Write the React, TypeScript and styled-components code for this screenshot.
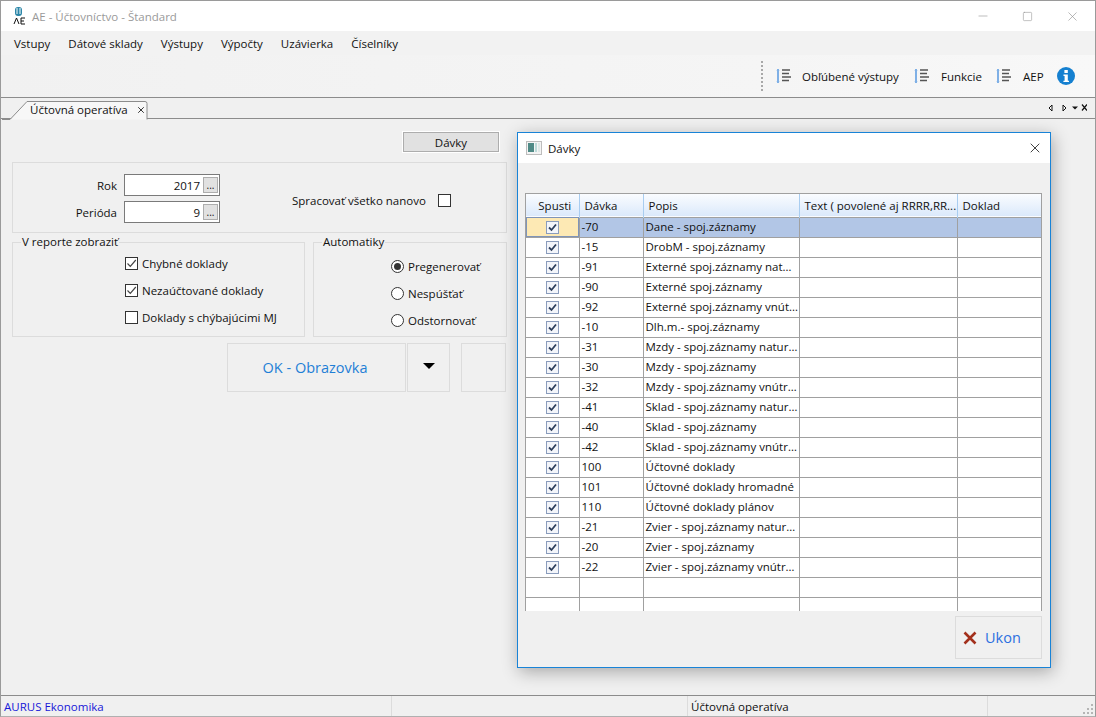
import React from "react";
import styled, { createGlobalStyle } from "styled-components";
import { Minus, Square, X } from "lucide-react";

const GlobalStyle = createGlobalStyle`
  html, body {
    margin: 0;
    padding: 0;
    background: #f0f0f0;
  }
  * {
    box-sizing: border-box;
  }
`;

const Window = styled.div`
  position: relative;
  width: 1096px;
  height: 717px;
  display: flex;
  flex-direction: column;
  overflow: hidden;
  background: #f0f0f0;
  border: 1px solid #9a9a9a;
  border-bottom-color: #b0b0b0;
  font-family: "Open Sans", "Noto Sans", sans-serif;
  font-size: 11.5px;
  color: #111;
`;

const TitleBar = styled.div`
  height: 30px;
  flex: none;
  background: #fff;
  display: flex;
  align-items: center;
  padding-left: 12px;
`;

const TitleText = styled.span`
  margin-left: 5px;
  font-size: 11.5px;
  color: #9a9a9a;
`;

const WindowButtons = styled.div`
  margin-left: auto;
  display: flex;
  align-items: center;
  color: #8f8f8f;
`;

const WindowButton = styled.div`
  width: 45px;
  height: 30px;
  display: flex;
  align-items: center;
  justify-content: center;
`;

const MenuBar = styled.div`
  height: 24px;
  flex: none;
  display: flex;
  align-items: center;
  gap: 18px;
  padding: 0 0 0 13px;
  background: #f2f2f2;
`;

const ToolBar = styled.div`
  height: 43px;
  flex: none;
  display: flex;
  align-items: center;
  justify-content: flex-end;
  padding: 0 20px 0 0;
  background: linear-gradient(90deg, #f1f1f1 0%, #f5f5f5 70%, #f8f8f8 100%);
  border-bottom: 1px solid #8c8c8c;
`;

const Grip = styled.div`
  width: 2px;
  height: 31px;
  margin-right: 13px;
  background: repeating-linear-gradient(#a8a8a8 0 2px, transparent 2px 4px);
`;

const ToolItem = styled.div<{ $gap: number; $width: number }>`
  width: ${(p) => p.$width}px;
  display: flex;
  align-items: center;
  gap: ${(p) => p.$gap}px;
`;

const TabStrip = styled.div`
  height: 21px;
  flex: none;
  position: relative;
  display: flex;
  align-items: flex-end;
  background: #f0f0f0;
  border-bottom: 1px solid #8c8c8c;
  padding-left: 1px;
`;

const Tab = styled.div`
  position: relative;
  height: 19px;
  margin-bottom: -1px;
  width: 146px;
  display: flex;
  align-items: center;
  padding-left: 28px;
  gap: 8px;
  font-size: 11.5px;
`;

const TabShape = styled.svg`
  position: absolute;
  left: 0;
  top: 0;
`;

const TabLabel = styled.span`
  position: relative;
`;

const TabClose = styled(X)`
  position: relative;
`;

const TabTools = styled.div`
  margin-left: auto;
  margin-right: 8px;
  align-self: center;
  display: flex;
  gap: 3px;
`;

const Content = styled.div`
  flex: 1;
  padding: 13px 0 0 11px;
  min-height: 0;
`;

const Form = styled.div`
  width: 495px;
  display: flex;
  flex-direction: column;
`;

const BatchButton = styled.div`
  align-self: flex-end;
  margin-right: 8px;
  width: 96px;
  height: 20px;
  background: #e1e1e1;
  border: 1px solid #adadad;
  outline: 1px solid #fff;
  display: flex;
  align-items: center;
  justify-content: center;
`;

const TopPanel = styled.div`
  margin-top: 10px;
  height: 71px;
  border: 1px solid #dcdcdc;
  display: flex;
  padding: 11px 0 0 0;
`;

const FieldGrid = styled.div`
  display: grid;
  grid-template-columns: 104px 96px;
  grid-auto-rows: 22px;
  row-gap: 5px;
  column-gap: 7px;
  align-items: center;
`;

const FieldLabel = styled.label`
  text-align: right;
`;

const FieldBox = styled.div`
  height: 22px;
  background: #fff;
  border: 1px solid #7a7a7a;
  display: flex;
  align-items: center;
  justify-content: flex-end;
  padding-right: 1px;
  gap: 3px;
`;

const DotsButton = styled.span`
  width: 15px;
  height: 16px;
  background: #e1e1e1;
  border: 1px solid #adadad;
  font-size: 10px;
  line-height: 15px;
  text-align: center;
`;

const RebuildRow = styled.div`
  margin: 16px 0 0 72px;
  height: 20px;
  display: flex;
  align-items: center;
  gap: 12px;
`;

const GroupRow = styled.div`
  margin-top: 9px;
  display: flex;
  gap: 8px;
`;

const Group = styled.fieldset<{ $width: number }>`
  width: ${(p) => p.$width}px;
  height: 95px;
  margin: 0;
  padding: 0;
  border: 1px solid #dcdcdc;
  position: relative;
`;

const GroupTitle = styled.span`
  position: absolute;
  left: 8px;
  top: -8px;
  padding: 0 1px;
  line-height: 14px;
  background: #f0f0f0;
`;

const OptionList = styled.div<{ $left: number; $top: number; $gap: number }>`
  padding: ${(p) => p.$top}px 0 0 ${(p) => p.$left}px;
  display: flex;
  flex-direction: column;
  gap: ${(p) => p.$gap}px;
`;

const Option = styled.div`
  height: 14px;
  display: flex;
  align-items: center;
  gap: 4px;
  white-space: nowrap;
`;

const CheckBox = styled.span<{ $on?: boolean }>`
  width: 13px;
  height: 13px;
  flex: none;
  background: #fff;
  border: 1px solid #333;
  display: block;
  position: relative;
`;

const CheckMark = styled.svg`
  position: absolute;
  left: 0;
  top: 0;
`;

const Radio = styled.span<{ $on?: boolean }>`
  width: 13px;
  height: 13px;
  flex: none;
  border-radius: 50%;
  background: #fff;
  border: 1px solid #333;
  display: flex;
  align-items: center;
  justify-content: center;
  &::after {
    content: "";
    width: 7px;
    height: 7px;
    border-radius: 50%;
    background: ${(p) => (p.$on ? "#333" : "transparent")};
  }
`;

const ActionRow = styled.div`
  margin-top: 6px;
  padding-left: 215px;
  display: flex;
`;

const ActionButton = styled.div<{ $width: number; $gapRight?: number }>`
  width: ${(p) => p.$width}px;
  height: 49px;
  margin-right: ${(p) => p.$gapRight ?? 0}px;
  border: 1px solid #dcdcdc;
  display: flex;
  align-items: center;
  justify-content: center;
`;

const OkLabel = styled.span`
  font-size: 14.5px;
  color: #1f7fd6;
  margin-right: 3px;
`;

const ArrowDown = styled.span`
  width: 0;
  height: 0;
  border-left: 6px solid transparent;
  border-right: 6px solid transparent;
  border-top: 6px solid #000;
  margin-bottom: 3px;
`;

const StatusBar = styled.div`
  height: 21px;
  flex: none;
  display: flex;
  align-items: center;
  border-top: 1px solid #8c8c8c;
  background: #f0f0f0;
  position: relative;
`;

const StatusCell = styled.div<{ $width: number; $blue?: boolean }>`
  width: ${(p) => p.$width}px;
  height: 100%;
  padding-left: 3px;
  display: flex;
  align-items: center;
  border-right: 1px solid #dcdcdc;
  color: ${(p) => (p.$blue ? "#1717d8" : "#111")};
`;

const ResizeGrip = styled.svg`
  position: absolute;
  right: 1px;
  bottom: 1px;
`;

const Dialog = styled.div`
  position: absolute;
  left: 516px;
  top: 131px;
  width: 534px;
  height: 536px;
  display: flex;
  flex-direction: column;
  background: #f0f0f0;
  border: 1px solid #1883d7;
  box-shadow: 2px 4px 16px rgba(0, 0, 0, 0.3);
`;

const DialogTitle = styled.div`
  height: 30px;
  flex: none;
  background: #fff;
  display: flex;
  align-items: center;
  padding-left: 8px;
  gap: 6px;
`;

const DialogClose = styled(X)`
  margin-left: auto;
  margin-right: 7px;
  color: #111;
`;

const TableWrap = styled.div`
  margin: 30px 0 0 7px;
  width: 517px;
  height: 418px;
  flex: none;
  overflow: hidden;
  background: #fff;
  border-top: 1px solid #a0a0a0;
  border-left: 1px solid #a0a0a0;
  border-right: 1px solid #a0a0a0;
`;

const Grid = styled.table`
  width: 515px;
  table-layout: fixed;
  border-collapse: collapse;
`;

const HeadRow = styled.tr`
  height: 23px;
  background: linear-gradient(#fafcff 0%, #dbe9fb 100%);
  border-bottom: 1px solid #a0a0a0;
`;

const HeadCell = styled.th<{ $center?: boolean }>`
  padding: 0 0 0 5px;
  font-weight: 400;
  text-align: ${(p) => (p.$center ? "center" : "left")};
  border-right: 1px solid #a9cdf0;
  white-space: nowrap;
  overflow: hidden;
  &:last-child {
    border-right: 0;
  }
`;

const BodyRow = styled.tr<{ $selected?: boolean }>`
  height: 20px;
  background: ${(p) => (p.$selected ? "#b2c6e6" : "#fff")};
`;

const Cell = styled.td`
  padding: 0 0 0 2px;
  border-right: 1px solid #a0a0a0;
  border-bottom: 1px solid #a0a0a0;
  white-space: nowrap;
  overflow: hidden;
  text-overflow: ellipsis;
  line-height: 14px;
  &:last-child {
    border-right: 0;
  }
`;

const CheckCell = styled.td<{ $focus?: boolean }>`
  padding: 0;
  text-align: center;
  border-right: 1px solid #a0a0a0;
  border-bottom: 1px solid #a0a0a0;
  background: ${(p) => (p.$focus ? "#fde9b4" : "transparent")};
  outline: ${(p) => (p.$focus ? "1px solid #7f94b8" : "none")};
  outline-offset: -1px;
`;

const GridCheck = styled.svg`
  display: block;
  margin: 0 auto;
`;

const DialogFooter = styled.div`
  flex: 1;
  display: flex;
  justify-content: flex-end;
  padding: 5px 8px 0 0;
`;

const CancelButton = styled.div`
  width: 87px;
  height: 43px;
  border: 1px solid #dcdcdc;
  display: flex;
  align-items: center;
  padding-left: 7px;
  gap: 8px;
  font-size: 14.5px;
  color: #2b6fe0;
`;

const columns = [53, 64, 156, 158, 84];

const rows: [string, string][] = [
  ["-70", "Dane  - spoj.záznamy"],
  ["-15", "DrobM - spoj.záznamy"],
  ["-91", "Externé spoj.záznamy naturálne"],
  ["-90", "Externé spoj.záznamy"],
  ["-92", "Externé spoj.záznamy vnútropodnikové"],
  ["-10", "Dlh.m.- spoj.záznamy"],
  ["-31", "Mzdy  - spoj.záznamy naturálne"],
  ["-30", "Mzdy  - spoj.záznamy"],
  ["-32", "Mzdy  - spoj.záznamy vnútropodnikové"],
  ["-41", "Sklad - spoj.záznamy naturálne"],
  ["-40", "Sklad - spoj.záznamy"],
  ["-42", "Sklad - spoj.záznamy vnútropodnikové"],
  ["100", "Účtovné doklady"],
  ["101", "Účtovné doklady hromadné"],
  ["110", "Účtovné doklady plánov"],
  ["-21", "Zvier - spoj.záznamy naturálne"],
  ["-20", "Zvier - spoj.záznamy"],
  ["-22", "Zvier - spoj.záznamy vnútropodnikové"],
];

const ListIcon = () => (
  <svg width="16" height="16" viewBox="0 0 16 16">
    <path d="M2 1v14" stroke="#7fb0e6" strokeWidth="2" />
    <path d="M1 3l1-2 1 2M1 13l1 2 1-2" stroke="#7fb0e6" strokeWidth="1" fill="none" />
    <path d="M6 2h8M6 5.5h7M6 9h9M6 12.5h7" stroke="#555" strokeWidth="1.4" />
  </svg>
);

const AppLogo = () => (
  <svg width="14" height="20" viewBox="0 0 14 20">
    <rect x="2" y="1" width="7" height="9" rx="3" fill="#2b86a8" />
    <path d="M4 2v6M7 2v6" stroke="#fff" strokeWidth="1" />
    <path d="M1 18l2.5-6 2.5 6M8 12v6h4M8 15h3M8 12h4" stroke="#111" strokeWidth="1" fill="none" />
  </svg>
);

const InfoIcon = () => (
  <svg width="18" height="18" viewBox="0 0 18 18">
    <circle cx="9" cy="9" r="9" fill="#1580d0" />
    <rect x="7.4" y="3" width="3.4" height="3" fill="#fff" />
    <path d="M6.5 7.5h4.3v6.2h1.2v1.4H6.4v-1.4h1.2V9H6.5z" fill="#fff" />
  </svg>
);

const GridCheckIcon = () => (
  <GridCheck width="13" height="13" viewBox="0 0 13 13">
    <rect x="0.5" y="0.5" width="12" height="12" fill="#f3f5fa" stroke="#8a9cbc" />
    <path d="M3 6.5l2.5 2.5L10 3.5" stroke="#2c3e5c" strokeWidth="1.8" fill="none" />
  </GridCheck>
);

const Tick = () => (
  <CheckMark width="11" height="11" viewBox="0 0 11 11">
    <path d="M1.5 5.5l2.8 2.8L9.8 2" stroke="#444" strokeWidth="1.2" fill="none" />
  </CheckMark>
);

const DialogIcon = () => (
  <svg width="16" height="14" viewBox="0 0 16 14">
    <rect x="0.5" y="0.5" width="15" height="13" fill="#f4f4f4" stroke="#bdbdbd" />
    <rect x="2" y="2" width="6" height="9" fill="#4f8a86" />
    <rect x="9" y="2" width="2" height="9" fill="#bcdad8" />
    <rect x="12" y="2" width="2" height="9" fill="#dfe9e8" />
  </svg>
);

export default function App() {
  return (
    <>
      <GlobalStyle />
      <Window>
        <TitleBar>
          <AppLogo />
          <TitleText>AE - Účtovníctvo - Štandard</TitleText>
          <WindowButtons>
            <WindowButton>
              <Minus size={14} strokeWidth={1} />
            </WindowButton>
            <WindowButton>
              <Square size={11} strokeWidth={1.2} />
            </WindowButton>
            <WindowButton>
              <X size={15} strokeWidth={1} />
            </WindowButton>
          </WindowButtons>
        </TitleBar>
        <MenuBar>
          {["Vstupy", "Dátové sklady", "Výstupy", "Výpočty", "Uzávierka", "Číselníky"].map((m) => (
            <span key={m}>{m}</span>
          ))}
        </MenuBar>
        <ToolBar>
          <Grip />
          <ToolItem $gap={10} $width={138}>
            <ListIcon />
            <span>Obľúbené výstupy</span>
          </ToolItem>
          <ToolItem $gap={11} $width={82}>
            <ListIcon />
            <span>Funkcie</span>
          </ToolItem>
          <ToolItem $gap={11} $width={61}>
            <ListIcon />
            <span>AEP</span>
          </ToolItem>
          <InfoIcon />
        </ToolBar>
        <TabStrip>
          <Tab>
            <TabShape width="147" height="20" viewBox="0 0 147 20">
              <path
                d="M0 19.5h8L25 1.5h118a2 2 0 0 1 2 2v16"
                fill="#f7f7f7"
                stroke="#8c8c8c"
              />
            </TabShape>
            <TabLabel>Účtovná operatíva</TabLabel>
            <TabClose size={10} strokeWidth={2} />
          </Tab>
          <TabTools>
            <svg width="40" height="10" viewBox="0 0 40 10">
              <path d="M5 2v6L2 5z" fill="#fff" stroke="#111" />
              <path d="M16 2v6l3-3z" fill="#fff" stroke="#111" />
              <path d="M25 3.5h6l-3 3z" fill="#111" />
              <path d="M35 1.5l5 6M40 1.5l-5 6" stroke="#111" strokeWidth="1.2" />
            </svg>
          </TabTools>
        </TabStrip>
        <Content>
          <Form>
            <BatchButton>Dávky</BatchButton>
            <TopPanel>
              <FieldGrid>
                <FieldLabel>Rok</FieldLabel>
                <FieldBox>
                  2017
                  <DotsButton>...</DotsButton>
                </FieldBox>
                <FieldLabel>Perióda</FieldLabel>
                <FieldBox>
                  9
                  <DotsButton>...</DotsButton>
                </FieldBox>
              </FieldGrid>
              <RebuildRow>
                Spracovať všetko nanovo
                <CheckBox />
              </RebuildRow>
            </TopPanel>
            <GroupRow>
              <Group $width={293}>
                <GroupTitle>V reporte zobraziť</GroupTitle>
                <OptionList $left={112} $top={13} $gap={13}>
                  <Option>
                    <CheckBox>
                      <Tick />
                    </CheckBox>
                    Chybné doklady
                  </Option>
                  <Option>
                    <CheckBox>
                      <Tick />
                    </CheckBox>
                    Nezaúčtované doklady
                  </Option>
                  <Option>
                    <CheckBox />
                    Doklady s chýbajúcimi MJ
                  </Option>
                </OptionList>
              </Group>
              <Group $width={194}>
                <GroupTitle>Automatiky</GroupTitle>
                <OptionList $left={77} $top={16} $gap={13}>
                  <Option>
                    <Radio $on />
                    Pregenerovať
                  </Option>
                  <Option>
                    <Radio />
                    Nespúšťať
                  </Option>
                  <Option>
                    <Radio />
                    Odstornovať
                  </Option>
                </OptionList>
              </Group>
            </GroupRow>
            <ActionRow>
              <ActionButton $width={179} $gapRight={1}>
                <OkLabel>OK - Obrazovka</OkLabel>
              </ActionButton>
              <ActionButton $width={43} $gapRight={11}>
                <ArrowDown />
              </ActionButton>
              <ActionButton $width={45} />
            </ActionRow>
          </Form>
        </Content>
        <StatusBar>
          <StatusCell $width={391} $blue>
            AURUS Ekonomika
          </StatusCell>
          <StatusCell $width={296} />
          <StatusCell $width={300}>Účtovná operatíva</StatusCell>
          <ResizeGrip width="12" height="12" viewBox="0 0 12 12">
            <path d="M9 1h2v2H9zM5 5h2v2H5zM9 5h2v2H9zM1 9h2v2H1zM5 9h2v2H5zM9 9h2v2H9z" fill="#b5b5b5" />
          </ResizeGrip>
        </StatusBar>
        <Dialog>
          <DialogTitle>
            <DialogIcon />
            Dávky
            <DialogClose size={16} strokeWidth={1.2} />
          </DialogTitle>
          <TableWrap>
            <Grid>
              <colgroup>
                {columns.map((w, i) => (
                  <col key={i} style={{ width: w }} />
                ))}
              </colgroup>
              <thead>
                <HeadRow>
                  <HeadCell $center>Spusti</HeadCell>
                  <HeadCell>Dávka</HeadCell>
                  <HeadCell>Popis</HeadCell>
                  <HeadCell>Text ( povolené aj RRRR,RR...</HeadCell>
                  <HeadCell>Doklad</HeadCell>
                </HeadRow>
              </thead>
              <tbody>
                {rows.map(([id, name], i) => (
                  <BodyRow key={id} $selected={i === 0}>
                    <CheckCell $focus={i === 0}>
                      <GridCheckIcon />
                    </CheckCell>
                    <Cell>{id}</Cell>
                    <Cell>{name}</Cell>
                    <Cell />
                    <Cell />
                  </BodyRow>
                ))}
                {[0, 1].map((i) => (
                  <BodyRow key={i}>
                    <CheckCell />
                    <Cell />
                    <Cell />
                    <Cell />
                    <Cell />
                  </BodyRow>
                ))}
              </tbody>
            </Grid>
          </TableWrap>
          <DialogFooter>
            <CancelButton>
              <svg width="14" height="14" viewBox="0 0 14 14">
                <path d="M1.5 1.5l11 11M12.5 1.5l-11 11" stroke="#a3301c" strokeWidth="2.6" />
              </svg>
              Ukon
            </CancelButton>
          </DialogFooter>
        </Dialog>
      </Window>
    </>
  );
}
